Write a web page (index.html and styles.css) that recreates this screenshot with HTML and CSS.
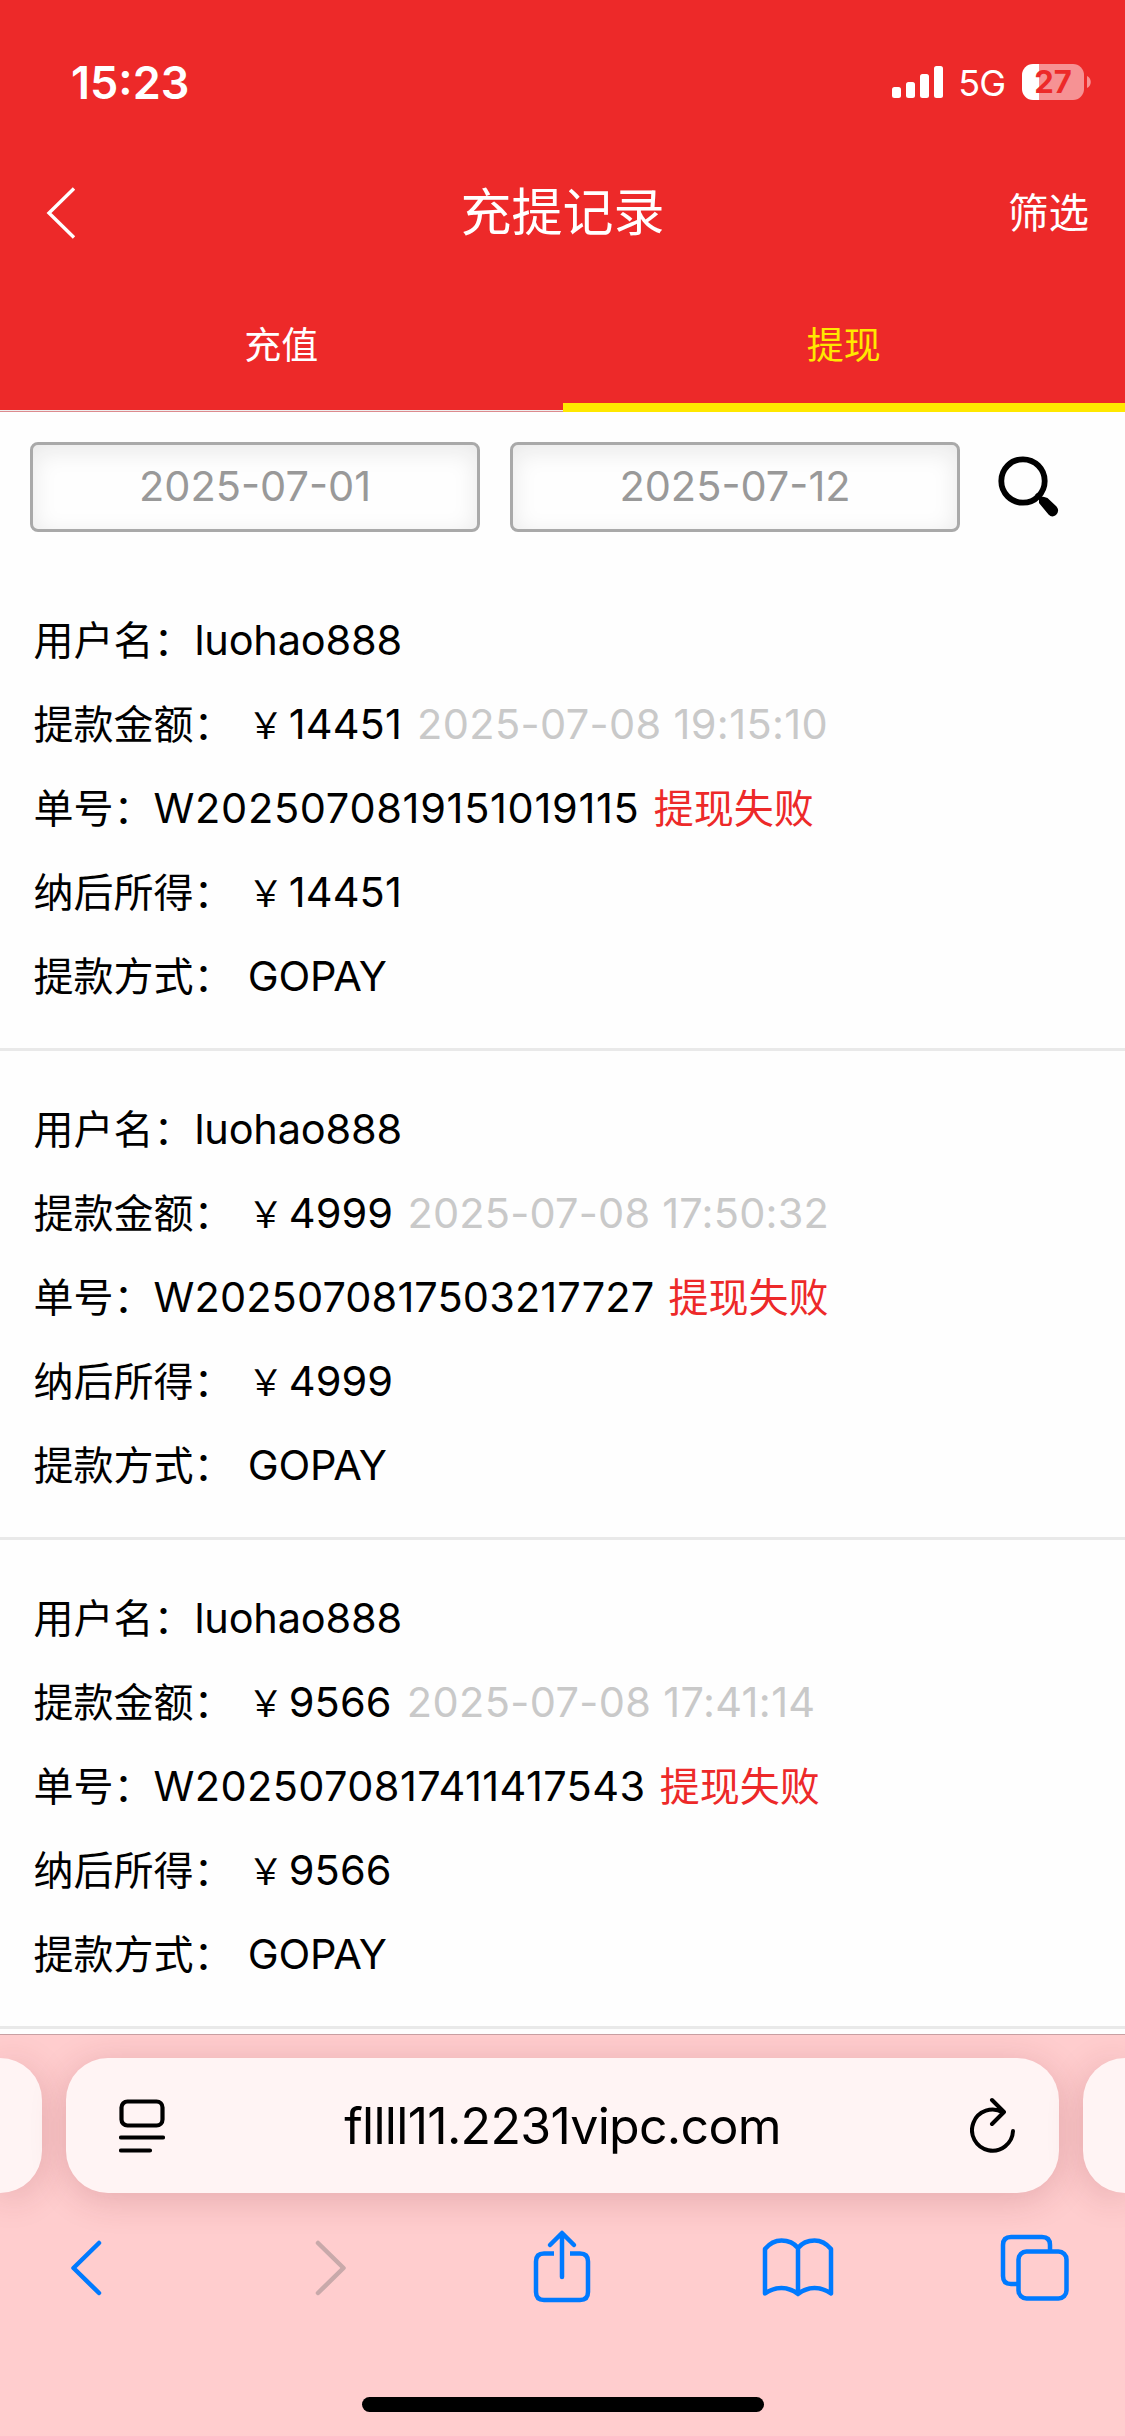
FILE: index.html
```html
<!DOCTYPE html>
<html lang="zh-CN">
<head>
    <meta charset="UTF-8">
    <meta name="viewport" content="width=device-width, initial-scale=1.0">
    <title>充提记录</title>
    <link rel="stylesheet" href="styles.css">
</head>
<body>
    <div class="status-bar">
        <span class="time">15:23</span>
        <div class="status-icons">
            <svg class="signal" width="51" height="32" viewBox="0 0 51 32" fill="#fff">
                <rect x="0" y="21" width="9" height="11" rx="2.5"/>
                <rect x="14" y="16" width="9" height="16" rx="2.5"/>
                <rect x="28" y="8" width="9" height="24" rx="2.5"/>
                <rect x="42" y="0" width="9" height="32" rx="2.5"/>
            </svg>
            <span class="network">5G</span>
            <div class="battery"><span>27</span></div>
            <svg width="4" height="12" viewBox="0 0 4 12" class="battery-tip"><path d="M0 0C5 2 5 10 0 12Z" fill="#f69294"/></svg>
        </div>
    </div>
    <div class="header">
        <svg class="back" width="30" height="52" viewBox="0 0 30 52"><path d="M28 1.5L3 26L28 50.5" fill="none" stroke="#fff" stroke-width="3.4"/></svg>
        <h1>充提记录</h1>
        <a class="filter">筛选</a>
    </div>
    <div class="tabs">
        <a class="tab">充值</a>
        <a class="tab active">提现</a>
    </div>
    <div class="search">
        <div class="date-input">2025-07-01</div>
        <div class="date-input">2025-07-12</div>
        <svg class="search-icon" width="62" height="62" viewBox="0 0 62 62">
            <circle cx="25" cy="25" r="21.7" fill="none" stroke="#000" stroke-width="5.8"/>
            <path d="M41 42L41 47L50.5 58.5Q54 62 58 59Q62 55 58.5 50.5L49.5 42Q46 40.5 43.5 40.5L39 37L37 39Z" fill="#000"/>
        </svg>
    </div>

    <div class="list">
        <div class="record">
            <p>用户名：<span class="name">luohao888</span></p>
            <p>提款金额： <span class="yen">￥</span><span class="num">14451</span> <span class="date">2025-07-08 19:15:10</span></p>
            <p>单号：<span class="order">W2025070819151019115</span> <span class="fail">提现失败</span></p>
            <p>纳后所得： <span class="yen">￥</span><span class="num">14451</span></p>
            <p>提款方式： <span class="pay">GOPAY</span></p>
        </div>
        <div class="record">
            <p>用户名：<span class="name">luohao888</span></p>
            <p>提款金额： <span class="yen">￥</span><span class="num">4999</span> <span class="date">2025-07-08 17:50:32</span></p>
            <p>单号：<span class="order">W2025070817503217727</span> <span class="fail">提现失败</span></p>
            <p>纳后所得： <span class="yen">￥</span><span class="num">4999</span></p>
            <p>提款方式： <span class="pay">GOPAY</span></p>
        </div>
        <div class="record">
            <p>用户名：<span class="name">luohao888</span></p>
            <p>提款金额： <span class="yen">￥</span><span class="num">9566</span> <span class="date">2025-07-08 17:41:14</span></p>
            <p>单号：<span class="order">W2025070817411417543</span> <span class="fail">提现失败</span></p>
            <p>纳后所得： <span class="yen">￥</span><span class="num">9566</span></p>
            <p>提款方式： <span class="pay">GOPAY</span></p>
        </div>
    </div>

    <div class="browser">
        <div class="address-row">
            <div class="address prev"></div>
            <div class="address main">
                <svg width="46" height="56" viewBox="0 0 46 56" fill="none" stroke="#000" stroke-width="4.2">
                    <rect x="2.5" y="3.5" width="41" height="24" rx="6"/>
                    <path d="M2 39.5H44M2 52.5H31" stroke-linecap="round"/>
                </svg>
                <span class="url">fllll11.2231vipc.com</span>
                <svg width="46" height="58" viewBox="0 0 46 58" fill="none" stroke="#000" stroke-width="4" stroke-linecap="round" stroke-linejoin="round">
                    <path d="M43 34A20.5 20.5 0 1 1 33 15.5M22 3L34 15L22 27" />
                </svg>
            </div>
            <div class="address next"></div>
        </div>
        <div class="toolbar">
            <svg viewBox="1 0 36 76"><path d="M31 13L5.5 38L31 63"/></svg>
            <svg class="disabled" viewBox="-7 0 36 76"><path d="M5 13L30.5 38L5 63"/></svg>
            <svg viewBox="-1 0 60 76"><path d="M22 23.5H12Q4 23.5 4 31.5V62Q4 70 12 70H48Q56 70 56 62V31.5Q56 23.5 48 23.5H38" stroke-linecap="butt"/><path d="M30 47V4M18 15L30 3L42 15"/></svg>
            <svg viewBox="0 0 76 76"><path d="M38 64Q46 58 54.5 58Q63 58 71 63.5V19Q64 10.5 54.5 10.5Q44 10.5 38 18Q32 10.5 21.5 10.5Q12 10.5 5 19V63.5Q13 58 21.5 58Q30 58 38 64V18"/></svg>
            <svg viewBox="0 0 70 76"><path d="M17 54H11Q3 54 3 46V15Q3 7 11 7H42Q50 7 50 15V20" stroke-linecap="butt"/><rect x="18.5" y="21.5" width="48" height="47" rx="8"/></svg>
        </div>
        <div class="home-bar"></div>
    </div>
</body>
</html>
```

FILE: styles.css
```css
* {
    box-sizing: border-box;
}
body {
    margin: 0;
    width: 1125px;
    height: 2436px;
    overflow: hidden;
    display: flex;
    flex-direction: column;
    background: #fefefe;
    color: #000;
    font-family: Inter, "Noto Sans CJK SC", sans-serif;
    font-size: 40px;
}
.status-bar {
    height: 151px;
    flex: none;
    padding: 52px 34px 0 71px;
    display: flex;
    justify-content: space-between;
    background: #ed2929;
    color: #fff;
}
.time {
    font-size: 45px;
    font-weight: 600;
    line-height: 61px;
}
.status-icons {
    height: 60px;
    display: flex;
    align-items: center;
}
.network {
    font-size: 36px;
    letter-spacing: -1px;
    margin: 2px 17px 0 15px;
    line-height: 60px;
}
.battery {
    width: 62px;
    height: 36px;
    border-radius: 11px;
    background: linear-gradient(to right, #fff 17px, #f69294 17px);
    color: #ed2929;
    font-size: 31px;
    font-weight: 700;
    line-height: 36px;
    text-align: center;
}
.battery-tip {
    margin-left: 3px;
}
.header {
    height: 130px;
    flex: none;
    padding: 0 36px 6px 46px;
    display: grid;
    grid-template-columns: 1fr auto 1fr;
    align-items: center;
    background: #ed2929;
    color: #fff;
}
.header h1 {
    margin: 0;
    font-size: 51px;
    font-weight: 400;
    line-height: 72px;
    padding-right: 10px;
}
.filter {
    justify-self: end;
    font-size: 40.5px;
    line-height: 60px;
    padding-top: 2px;
}
.tabs {
    height: 131px;
    flex: none;
    display: flex;
    background: #ed2929;
}
.tab {
    flex: 1;
    padding-top: 38px;
    text-align: center;
    color: #fff;
    font-size: 37px;
    line-height: 54px;
    border-bottom: 1px solid #dc8a8e;
    box-shadow: inset 0 -1px #eee;
}
.tab.active {
    color: #ffe800;
    border-bottom: 9px solid #ffe800;
    box-shadow: none;
}
.search {
    flex: none;
    height: 150px;
    padding: 30px 30px 0;
    display: flex;
    gap: 30px;
}
.date-input {
    width: 450px;
    height: 90px;
    border: 3px solid #a9a9a9;
    border-radius: 8px;
    box-shadow: inset 0 6px 24px #e8e8e8;
    color: #999;
    font-size: 41.5px;
    line-height: 83px;
    text-align: center;
}
.search-icon {
    margin: 14px 0 0 8px;
}
.list {
    flex: none;
    height: 1472px;
    overflow: hidden;
}
.record {
    height: 489px;
    padding: 36px 34px 0 33.5px;
    border-bottom: 3px solid #e9e9e9;
}
.record p {
    margin: 0;
    height: 84px;
    line-height: 84px;
    white-space: nowrap;
}
.name, .num, .order, .date, .pay {
    font-size: 41.5px;
}
.name {
    margin-left: 1px;
    letter-spacing: -0.2px;
}
.yen {
    display: inline-block;
    width: 40px;
    margin: 0 3px 0 1px;
    font-size: 36px;
    text-align: center;
}
.num {
    letter-spacing: 0.1px;
}
.date {
    margin-left: 4px;
    color: #c9c9c9;
    letter-spacing: 0.35px;
}
.pay {
    margin-left: 3px;
    letter-spacing: -0.2px;
}
.fail {
    margin-left: 3px;
    color: #ed2929;
}
/* 单号里 1 越多越窄，补一点字距 */
.record:nth-child(1) .order {
    letter-spacing: 0.68px;
}
.record:nth-child(2) .order {
    letter-spacing: 0.1px;
}
.record:nth-child(2) .date {
    margin-left: 3px;
    letter-spacing: 0.2px;
}
.record:nth-child(3) .order {
    letter-spacing: 0.38px;
}
.browser {
    flex: 1;
    border-top: 1px solid #c8a0a3;
    background: #ffcdce;
    display: flex;
    flex-direction: column;
}
.address-row {
    padding-top: 23px;
    display: flex;
    justify-content: space-between;
}
.address {
    height: 135px;
    background: #fff4f4;
    box-shadow: 0 6px 36px rgba(120, 30, 40, 0.2);
}
.address.prev {
    width: 42px;
    border-radius: 0 42px 42px 0;
}
.address.next {
    width: 42px;
    border-radius: 42px 0 0 42px;
}
.address.main {
    width: 993px;
    border-radius: 42px;
    padding: 0 43px 0 53px;
    display: flex;
    align-items: center;
    justify-content: space-between;
}
.url {
    margin-right: 10px;
    font-size: 50px;
    letter-spacing: -0.7px;
}
.toolbar {
    margin-top: 37px;
    padding: 0 52px 0 49px;
    display: flex;
    justify-content: space-between;
}
.toolbar svg {
    width: 76px;
    height: 76px;
    overflow: visible;
    fill: none;
    stroke: #007aff;
    stroke-width: 4.5;
    stroke-linecap: round;
    stroke-linejoin: round;
}
.toolbar .disabled {
    stroke: #c8a9aa;
}
.home-bar {
    width: 402px;
    height: 15px;
    margin: 91px auto 0;
    border-radius: 8px;
    background: #000;
}
```
